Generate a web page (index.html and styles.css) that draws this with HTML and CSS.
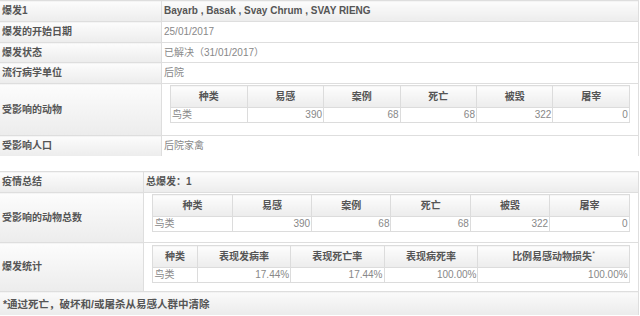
FILE: index.html
```html
<!DOCTYPE html>
<html lang="zh">
<head>
    <meta charset="UTF-8">
    <meta name="viewport" content="width=device-width, initial-scale=1.0">
    <title>爆发报告</title>
    <link rel="stylesheet" href="styles.css">
</head>
<body>
    <!-- Outbreak details -->
    <table class="report outbreak">
        <tr class="head-row">
            <th class="label">爆发1</th>
            <th class="value">Bayarb , Basak , Svay Chrum , SVAY RIENG</th>
        </tr>
        <tr>
            <th class="label">爆发的开始日期</th>
            <td class="value">25/01/2017</td>
        </tr>
        <tr class="short-row">
            <th class="label">爆发状态</th>
            <td class="value">已解决（31/01/2017）</td>
        </tr>
        <tr>
            <th class="label">流行病学单位</th>
            <td class="value">后院</td>
        </tr>
        <tr class="animals-row">
            <th class="label">受影响的动物</th>
            <td class="value nested">
                <table class="grid even">
                    <tr>
                        <th>种类</th><th>易感</th><th>案例</th><th>死亡</th><th>被毁</th><th>屠宰</th>
                    </tr>
                    <tr>
                        <td class="kind">鸟类</td><td>390</td><td>68</td><td>68</td><td>322</td><td>0</td>
                    </tr>
                </table>
            </td>
        </tr>
        <tr>
            <th class="label">受影响人口</th>
            <td class="value">后院家禽</td>
        </tr>
    </table>

    <!-- Summary -->
    <table class="report summary">
        <tr class="head-row">
            <th class="label">疫情总结</th>
            <th class="value">总爆发：1</th>
        </tr>
        <tr class="totals-row">
            <th class="label">受影响的动物总数</th>
            <td class="value nested">
                <table class="grid even">
                    <tr>
                        <th>种类</th><th>易感</th><th>案例</th><th>死亡</th><th>被毁</th><th>屠宰</th>
                    </tr>
                    <tr>
                        <td class="kind">鸟类</td><td>390</td><td>68</td><td>68</td><td>322</td><td>0</td>
                    </tr>
                </table>
            </td>
        </tr>
        <tr class="stats-row">
            <th class="label">爆发统计</th>
            <td class="value nested">
                <table class="grid stats">
                    <tr>
                        <th class="col-kind">种类</th>
                        <th class="col-rate">表现发病率</th>
                        <th class="col-rate">表现死亡率</th>
                        <th class="col-rate">表现病死率</th>
                        <th class="col-loss">比例易感动物损失<sup>*</sup></th>
                    </tr>
                    <tr>
                        <td class="kind">鸟类</td><td>17.44%</td><td>17.44%</td><td>100.00%</td><td>100.00%</td>
                    </tr>
                </table>
            </td>
        </tr>
        <tr class="note-row">
            <td colspan="2">*通过死亡，破坏和/或屠杀从易感人群中清除</td>
        </tr>
    </table>
</body>
</html>
```

FILE: styles.css
```css
body {
    margin: 0;
    background: #fff;
    font-family: "Liberation Sans", "Noto Sans CJK SC", sans-serif;
    font-size: 10px;
    line-height: 12px;
    color: #888;
}

.report {
    width: 639px;
    border-collapse: collapse;
    table-layout: fixed;
}

.report > tbody > tr > th,
.report > tbody > tr > td {
    height: 20px;
    padding: 0 2px;
    border-top: 1px solid #dedede;
    border-right: 1px solid #dedede;
    text-align: left;
    vertical-align: middle;
}

.outbreak .label {
    width: 157px;
}

.summary {
    margin-top: 15px;
}

.summary .label {
    width: 139px;
}

.label {
    font-weight: bold;
    color: #555;
    background: linear-gradient(#fcfcfc, #ececec);
}

.head-row .value {
    font-weight: bold;
    color: #555;
    background: linear-gradient(#fcfcfc, #ececec);
}

.report > tbody > tr.short-row > th,
.report > tbody > tr.short-row > td {
    height: 19px;
}

.report > tbody > tr > td.nested {
    vertical-align: top;
    padding: 1px 0 0;
}

.report > tbody > tr.animals-row > th {
    height: 51px;
}

.report > tbody > tr.totals-row > th {
    height: 49px;
}

.report > tbody > tr.stats-row > th {
    height: 48px;
}

.report > tbody > tr.stats-row > td.nested {
    padding-top: 2px;
}

/* nested species tables */
.grid {
    width: 96.6%;
    margin: 0 auto;
    border-collapse: collapse;
}

.grid.even {
    table-layout: fixed;
}

.grid th {
    height: 21px;
    padding: 0 3px;
    border: 1px solid #dcdcdc;
    background: linear-gradient(#fdfdfd, #ececec);
    color: #555;
    font-weight: bold;
    text-align: center;
}

.grid td {
    height: 14px;
    padding: 0 1px;
    border: 1px solid #dcdcdc;
    background: #fff;
    text-align: right;
    white-space: nowrap;
}

.grid td.kind {
    text-align: left;
}

.grid sup {
    font-size: 7px;
    line-height: 0;
    font-weight: normal;
}

.col-kind {
    width: 40px;
}

.col-rate {
    width: 93px;
}

.col-loss {
    width: 157px;
}

.report > tbody > tr.note-row > td {
    height: 23px;
    padding: 0 3px;
    font-size: 10.5px;
    font-weight: bold;
    color: #555;
    background: linear-gradient(#fafafa, #ebebeb);
}
```
